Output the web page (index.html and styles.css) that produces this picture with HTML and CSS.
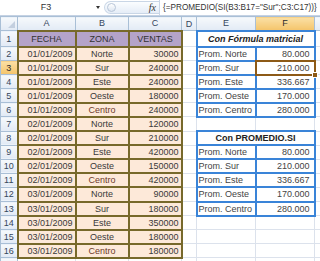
FILE: index.html
```html
<!DOCTYPE html>
<html lang="es">
<head>
    <meta charset="UTF-8">
    <title>PROMEDIO SI</title>
    <link rel="stylesheet" href="styles.css">
</head>
<body>
    <div class="formula_bar">
        <div class="name_box">F3<span class="drop"></span></div>
        <div class="fx_pill"><span class="knob"></span><span class="fx">fx</span></div>
        <div class="formula">{=PROMEDIO(SI(B3:B17="Sur";C3:C17))}</div>
    </div>
    <table class="sheet">
        <colgroup>
            <col class="c_rh"><col class="c_a"><col class="c_b"><col class="c_c"><col class="c_d"><col class="c_e"><col class="c_f"><col class="c_g">
        </colgroup>
        <tr class="heads">
            <th class="corner"><span class="tri"></span></th><th>A</th><th>B</th><th>C</th><th>D</th><th>E</th><th class="sel">F</th><th></th>
        </tr>
        <tr class="r1">
            <th>1</th><td class="h">FECHA</td><td class="h">ZONA</td><td class="h">VENTAS</td><td></td>
            <td class="t" colspan="2"><i>Con Fórmula matricial</i></td><td></td>
        </tr>
        <tr><th>2</th><td class="d">01/01/2009</td><td class="d z">Norte</td><td class="d n">30000</td><td></td><td class="b">Prom. Norte</td><td class="b n">80.000</td><td></td></tr>
        <tr><th class="sel">3</th><td class="d">01/01/2009</td><td class="d z">Sur</td><td class="d n">240000</td><td></td><td class="b">Prom. Sur</td><td class="b n act">210.000</td><td></td></tr>
        <tr><th>4</th><td class="d">01/01/2009</td><td class="d z">Este</td><td class="d n">240000</td><td></td><td class="b">Prom. Este</td><td class="b n">336.667</td><td></td></tr>
        <tr><th>5</th><td class="d">01/01/2009</td><td class="d z">Oeste</td><td class="d n">180000</td><td></td><td class="b">Prom. Oeste</td><td class="b n">170.000</td><td></td></tr>
        <tr><th>6</th><td class="d">01/01/2009</td><td class="d z red">Centro</td><td class="d n">240000</td><td></td><td class="b">Prom. Centro</td><td class="b n">280.000</td><td></td></tr>
        <tr><th>7</th><td class="d">02/01/2009</td><td class="d z">Norte</td><td class="d n">120000</td><td></td><td></td><td></td><td></td></tr>
        <tr><th>8</th><td class="d">02/01/2009</td><td class="d z">Sur</td><td class="d n">210000</td><td></td><td class="t" colspan="2">Con PROMEDIO.SI</td><td></td></tr>
        <tr><th>9</th><td class="d">02/01/2009</td><td class="d z">Este</td><td class="d n">420000</td><td></td><td class="b">Prom. Norte</td><td class="b n">80.000</td><td></td></tr>
        <tr><th>10</th><td class="d">02/01/2009</td><td class="d z">Oeste</td><td class="d n">150000</td><td></td><td class="b">Prom. Sur</td><td class="b n">210.000</td><td></td></tr>
        <tr><th>11</th><td class="d">02/01/2009</td><td class="d z red">Centro</td><td class="d n">420000</td><td></td><td class="b">Prom. Este</td><td class="b n">336.667</td><td></td></tr>
        <tr><th>12</th><td class="d">03/01/2009</td><td class="d z">Norte</td><td class="d n">90000</td><td></td><td class="b">Prom. Oeste</td><td class="b n">170.000</td><td></td></tr>
        <tr><th>13</th><td class="d">03/01/2009</td><td class="d z">Sur</td><td class="d n">180000</td><td></td><td class="b">Prom. Centro</td><td class="b n">280.000</td><td></td></tr>
        <tr><th>14</th><td class="d">03/01/2009</td><td class="d z">Este</td><td class="d n">350000</td><td></td><td></td><td></td><td></td></tr>
        <tr><th>15</th><td class="d">03/01/2009</td><td class="d z">Oeste</td><td class="d n">180000</td><td></td><td></td><td></td><td></td></tr>
        <tr><th>16</th><td class="d">03/01/2009</td><td class="d z red">Centro</td><td class="d n">180000</td><td></td><td></td><td></td><td></td></tr>
        <tr><th></th><td></td><td></td><td></td><td></td><td></td><td></td><td></td></tr>
    </table>
</body>
</html>
```

FILE: styles.css
```css
html, body {
    margin: 0;
    padding: 0;
    background: #fff;
    overflow: hidden;
}

body {
    width: 320px;
    height: 261px;
    font-family: "Liberation Sans", Arial, sans-serif;
}

/* barra de fórmulas */
.formula_bar {
    display: flex;
    height: 16px;
    border-bottom: 1px solid #c5d2e3;
    background: #fff;
    box-sizing: border-box;
}

.formula_bar .name_box {
    position: relative;
    width: 104px;
    font-size: 9px;
    line-height: 15px;
    color: #333;
    text-align: center;
    padding-right: 12px;
    box-sizing: border-box;
}

.formula_bar .drop {
    position: absolute;
    right: 4px;
    top: 6px;
    border-left: 2px solid transparent;
    border-right: 2px solid transparent;
    border-top: 3px solid #333;
}

.formula_bar .fx_pill {
    display: flex;
    align-items: center;
    justify-content: space-between;
    width: 55px;
    height: 13px;
    margin-top: 1px;
    padding: 0 3px 0 2px;
    box-sizing: border-box;
    border: 1px solid #c9d6e6;
    border-right: 0;
    border-radius: 7px 0 0 7px;
    background: linear-gradient(#fbfdff, #e5edf7);
}

.formula_bar .knob {
    width: 7px;
    height: 7px;
    border-radius: 50%;
    border: 1px solid #b7c5d8;
    background: linear-gradient(#fff, #dde6f1);
}

.formula_bar .fx {
    font-family: "Liberation Serif", serif;
    font-style: italic;
    font-size: 10px;
    color: #333;
}

.formula_bar .formula {
    flex: 1;
    font-size: 8.2px;
    line-height: 15px;
    color: #333;
    padding-left: 3px;
    white-space: nowrap;
    border-left: 1px solid #c9d6e6;
}

/* hoja */
.sheet {
    border-collapse: collapse;
    table-layout: fixed;
    width: 329px;
    font-size: 9px;
    color: #3a3a3a;
}

.c_rh { width: 17px; }
.c_a { width: 58px; }
.c_b { width: 53px; }
.c_c { width: 53px; }
.c_d { width: 15px; }
.c_e { width: 59px; }
.c_f { width: 59px; }
.c_g { width: 15px; }

.sheet tr {
    height: 14.1px;
}

.sheet tr.heads {
    height: 14px;
}

.sheet tr.r1 {
    height: 16px;
}

.sheet th {
    padding: 0;
    font-weight: normal;
    color: #35465c;
    background: linear-gradient(#f6f9fc, #e2eaf5);
    border: 1px solid #a9bfd6;
    text-align: center;
}

.sheet th.sel {
    background: linear-gradient(#fbe0a6, #f4c46a);
    color: #2b2b2b;
}

.sheet th.corner {
    position: relative;
}

.sheet .tri {
    position: absolute;
    right: 2px;
    bottom: 2px;
    border-left: 7px solid transparent;
    border-bottom: 7px solid #c3cfdf;
}

.sheet td {
    border: 1px solid #dce2ec;
    padding: 0 2px;
    white-space: nowrap;
    overflow: hidden;
    text-align: left;
}

.sheet td.h {
    background: #b4a3c9;
    border: 2px solid #77692b;
    text-align: center;
    color: #333;
}

.sheet td.d {
    background: #fde9d9;
    border: 2px solid #77692b;
    text-align: right;
}

.sheet td.z {
    text-align: center;
}

.sheet td.red {
    color: #6e3a2c;
}

.sheet td.n {
    text-align: right;
}

.sheet td.b.n {
    padding-right: 4px;
}

.sheet td.t {
    border: 2px solid #3a84d8;
    text-align: center;
    font-weight: bold;
    color: #222;
}

.sheet td.b {
    border: 2px solid #3a84d8;
    color: #444;
    padding-left: 1px;
}

.sheet td.act {
    position: relative;
    overflow: visible;
}

.sheet td.act::after {
    content: "";
    position: absolute;
    left: -2px;
    top: -2px;
    right: -2px;
    bottom: -2px;
    border: 2px solid #8d5a17;
}

.sheet td.act::before {
    content: "";
    position: absolute;
    right: -4px;
    bottom: -4px;
    width: 4px;
    height: 4px;
    background: #8d5a17;
    border: 1px solid #fff;
    z-index: 1;
}
```
